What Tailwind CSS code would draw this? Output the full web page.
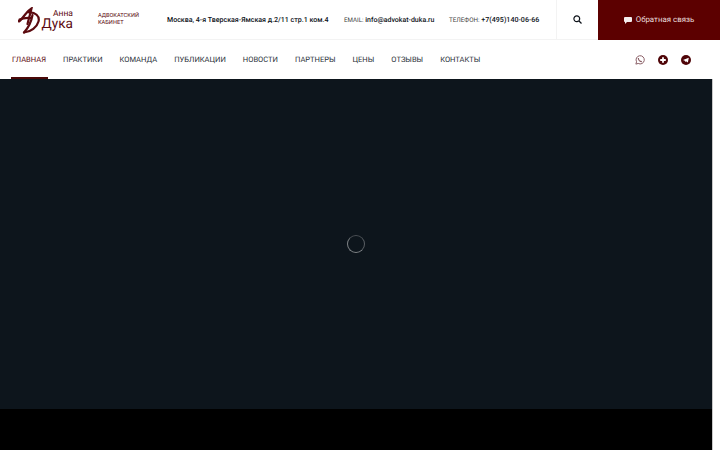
<!DOCTYPE html>
<html lang="ru">
<head>
    <meta charset="UTF-8">
    <meta name="viewport" content="width=device-width, initial-scale=1.0">
    <script src="https://cdn.jsdelivr.net/npm/@tailwindcss/browser@4"></script>
    <title>Адвокатский кабинет Анна Дука</title>
</head>
<body class="bg-white font-['Roboto',sans-serif] [text-rendering:geometricPrecision] w-[720px] h-[450px] overflow-hidden">
    <!-- top bar -->
    <header class="flex h-10 border-b border-[#f3f3f3] text-[#0d1219]">
        <div class="flex items-center w-[556px] shrink-0 pt-px">
            <a href="#" class="flex items-center w-[98px] pl-[18px] shrink-0">
                <svg width="22" height="27" viewBox="0 0 22 27" fill="none" stroke="#5c0a0f" stroke-width="2.200" stroke-linecap="round">
                    <path d="M0.500 14 C1 16 5 10 8 6.500 C10 4 12 2.500 13.500 1.500 C12.500 6 11 11 9.500 17"/>
                    <path d="M1.500 12.500 C5 11 9 10.500 13 11"/>
                    <path d="M11 5.500 C17 5 22 9 20.500 14.500 C19 20 13 25 6 25.500"/>
                    <path d="M14.500 8 C13.500 14 11 20 6 25.500"/>
                </svg>
                <div class="flex flex-col items-end w-[33px] leading-none text-[#5c0a0f]">
                    <span class="text-[8.500px] h-[8px] leading-[11px]">Анна</span>
                    <span class="text-[13.600px] h-[14px] leading-[14px]">Дука</span>
                </div>
            </a>
            <div class="w-[69px] shrink-0 text-[5.650px] leading-[7px] text-[#5c0a0f]">АДВОКАТСКИЙ<br>КАБИНЕТ</div>
            <div class="w-[177px] shrink-0 text-[7.050px] font-medium whitespace-nowrap">Москва, 4-я Тверская-Ямская д.2/11 стр.1 ком.4</div>
            <div class="w-[105px] shrink-0 text-[7px] font-medium whitespace-nowrap"><span class="text-[6.200px] font-normal text-[#444]">EMAIL:</span> info@advokat-duka.ru</div>
            <div class="text-[7.100px] font-medium whitespace-nowrap"><span class="text-[6.300px] font-normal text-[#444]">ТЕЛЕФОН:</span> +7(495)140-06-66</div>
        </div>
        <button class="flex items-center justify-center w-[42px] border-l border-[#f3f3f3]">
            <svg width="9" height="9" viewBox="0 0 9 9" fill="none" stroke="#0d1219" stroke-width="1.200"><circle cx="3.800" cy="3.800" r="2.900"/><path d="M6 6l2.500 2.500"/></svg>
        </button>
        <a href="#" class="flex flex-1 items-center justify-center gap-[4px] bg-[#5c0000] text-[7.900px] text-[#e8dcdc] -mb-px">
            <svg width="8" height="7" viewBox="0 0 8 7" fill="#f4eeee"><path d="M1 0h6a1 1 0 0 1 1 1v3a1 1 0 0 1-1 1H3L1 7V5a1 1 0 0 1-1-1V1a1 1 0 0 1 1-1z"/></svg>
            Обратная связь
        </a>
    </header>
    <!-- nav -->
    <nav class="flex items-stretch justify-between h-[39px] pl-[11px] pr-[29px] text-[7.550px] text-[#2a3038]">
        <ul class="flex gap-[15px]">
            <li class="flex items-center px-px pt-[2px] -mr-px text-[#5c0a0f] border-b-2 border-[#4a0808] w-[37px]">ГЛАВНАЯ</li>
            <li class="flex items-center px-px">ПРАКТИКИ</li>
            <li class="flex items-center px-px">КОМАНДА</li>
            <li class="flex items-center px-px">ПУБЛИКАЦИИ</li>
            <li class="flex items-center px-px">НОВОСТИ</li>
            <li class="flex items-center px-px">ПАРТНЕРЫ</li>
            <li class="flex items-center px-px">ЦЕНЫ</li>
            <li class="flex items-center px-px">ОТЗЫВЫ</li>
            <li class="flex items-center px-px">КОНТАКТЫ</li>
        </ul>
        <div class="flex items-center gap-[13px]">
            <svg width="10" height="10" viewBox="0 0 9 9" fill="none" stroke="#8a5f66" stroke-width="0.900"><path d="M.8 8.200l.6-2.100A3.700 3.700 0 1 1 2.900 7.600z"/><path d="M3 2.800c0 1.700 1.400 3.200 3.200 3.200" stroke-width="1.100"/></svg>
            <svg width="10" height="10" viewBox="0 0 9 9"><circle cx="4.500" cy="4.500" r="4.500" fill="#4f0508"/><path d="M4.500 2v5M2 4.500h5" stroke="#fff" stroke-width="1.600"/></svg>
            <svg width="10" height="10" viewBox="0 0 9 9"><circle cx="4.500" cy="4.500" r="4.500" fill="#4f0508"/><path d="M1.800 4.500L7 2.500 6.200 6.800 4.500 5.700 3.700 6.400 3.500 5.200z" fill="#fff"/></svg>
        </div>
    </nav>
    <!-- loader + footer -->
    <main class="w-[713px] border-r border-[#c8c8c8]">
        <div class="flex items-center justify-center h-[330px] bg-[#0d151c]">
            <div class="w-[18px] h-[18px] rounded-full border-[1.500px] border-[#7f8386] border-t-[#4a4f54] border-r-[#5a5f64]"></div>
        </div>
        <div class="h-[41px] bg-black"></div>
    </main>
</body>
</html>
